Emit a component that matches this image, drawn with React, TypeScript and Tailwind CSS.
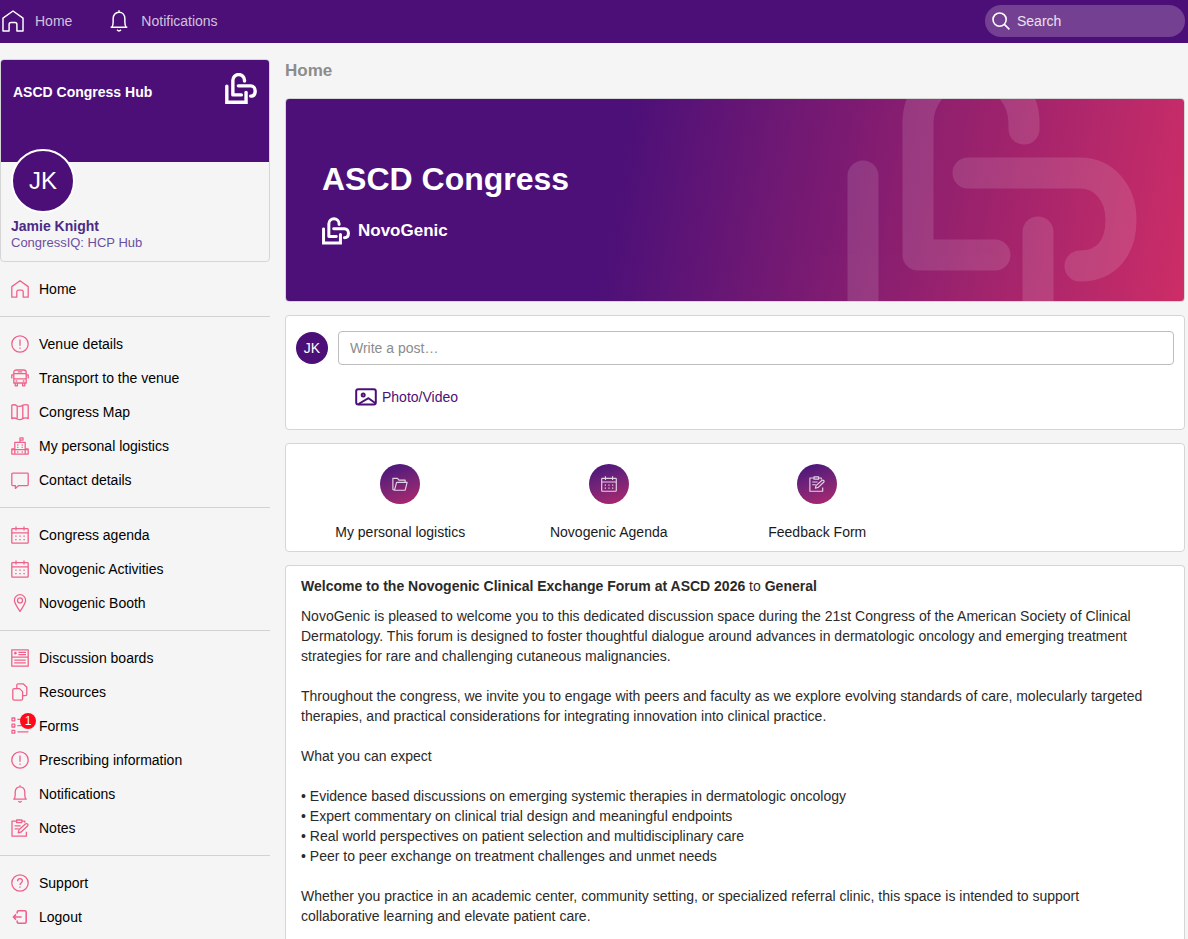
import { useState } from 'react';
import type { ReactNode } from 'react';

type IconName =
  | 'home' | 'alert' | 'bus' | 'map' | 'building' | 'chat' | 'calendar' | 'pin' | 'board'
  | 'copy' | 'list' | 'bell' | 'notes' | 'help' | 'logout' | 'folder' | 'search';

// all icons share an 18x18 grid
const icons: Record<IconName, ReactNode> = {
  home: <path d="M.8 6.6 9 .8l8.2 5.8v10.6h-5v-5.4q0-1.6-1.6-1.6H7.4q-1.6 0-1.6 1.6v5.4h-5z" />,
  alert: (
    <>
      <circle cx="9" cy="9" r="8.2" />
      <path d="M9 4.6v6.2M9 12.4v1.4" />
    </>
  ),
  bus: (
    <>
      <path d="M2.8 14V3.6Q2.8 1 5.4 1h7.2q2.6 0 2.6 2.6V14zM2.8 4.6h12.4M2.8 9.8h12.4M6.8 2.8h4.4" />
      <path d="M2.8 5.8H.8v3.6M15.2 5.8h2v3.6M4.6 12h1.6M11.8 12h1.6M4.2 14v2.8h2.2V14M11.6 14v2.8h2.2V14" />
    </>
  ),
  map: (
    <path d="M.8 2.2q2.7-1.2 5.4.8 2.800 1 5.600-.8 2.700-1.200 5.400 0v13.400q-2.600-1.400-5.400 0-2.800 1.800-5.600.4-2.800-1.800-5.400-.4zM6.200 3v13M11.800 2.200v13.400" />
  ),
  building: (
    <>
      <path d="M3.800 17V5.400h10.400V17M.4 17.200h17.200M.8 17v-5h3M17.200 17v-5h-3M.4 12.600h17.200M9 5.400V.8h3v2.400H9" />
      <path d="M6.200 8h1.200M10.600 8h1.200M6.200 10.400h1.200M10.600 10.400h1.200M6.200 15h1.200M10.600 15h1.200" />
    </>
  ),
  chat: <path d="M1.600 2.200h14.800q.8 0 .8.800v10.800q0 .8-.8.800H7.600l-3.200 2.800v-2.800H1.600q-.8 0-.8-.8V3q0-.8.8-.8z" />,
  calendar: (
    <>
      <path d="M1.600 2.600h14.800q.8 0 .8.800v13q0 .8-.8.800H1.600q-.8 0-.8-.8v-13q0-.8.8-.8zM.8 6.800h16.400M5 .4v4M13 .4v4" />
      <path d="M4.200 10.200h1.400M8.300 10.200h1.400M12.400 10.200h1.400M4.200 13.600h1.400M8.300 13.600h1.400M12.400 13.600h1.400" />
    </>
  ),
  pin: (
    <>
      <path d="M9 17.400C6.800 13.600 3.400 9.800 3.400 6.300a5.600 5.600 0 0 1 11.200 0c0 3.500-3.400 7.300-5.600 11.100z" />
      <circle cx="9" cy="6.400" r="2.500" />
    </>
  ),
  board: (
    <>
      <path d="M.8.8h16.400v16.400H.8zM.8 8.200h16.400M7.400 3.400H15M7.400 5.600H15M3.200 11.200h11.600M3.200 13.800h11.600" />
      <circle cx="4.400" cy="4.200" r=".7" />
    </>
  ),
  copy: (
    <path d="M3.200 5.600h5.400l3 3v7.200q0 1.400-1.400 1.400h-7q-1.400 0-1.400-1.400V7q0-1.400 1.400-1.400zM5.800 5.600V2.200Q5.800.8 7.200.8h5l3.600 3.400v7q0 1.400-1.400 1.400h-2.800" />
  ),
  list: (
    <path d="M1 1h2.800v2.800H1zM1 7.200h2.800V10H1zM1 13.400h2.800v2.800H1zM6.400 2.400h11M6.400 8.600h11M6.400 14.800h11" />
  ),
  bell: (
    <>
      <path d="M2.200 14.200h13.600M3.200 14.200c.8-1.400 1-2.600 1-4.200V7.200C4.200 4 6.200 1.800 9 1.800S13.800 4 13.800 7.200V10c0 1.600.2 2.800 1 4.200M9 1.800V.2" />
      <path d="M7.400 16.200q1.600 2 3.200 0" />
    </>
  ),
  notes: (
    <>
      <path d="M5.600 2.200H1v15h14.400v-4.400M10.800 2.200h3v1.600M5.600 1h5.200v2.600H5.600zM3.600 6.800h6M3.600 9.800h4" />
      <path d="m7.200 13.800.7-3 6.800-6q1-.6 1.900.3.800 1-.1 1.900l-6.400 6z" />
    </>
  ),
  help: (
    <>
      <circle cx="9" cy="9" r="8.200" />
      <path d="M6.600 7.200C6.600 5.600 7.600 4.700 9 4.700s2.400.9 2.400 2.200c0 1.700-2.400 1.900-2.400 4M9 12.400v1.400" />
    </>
  ),
  logout: (
    <path
      strokeWidth="1.600"
      d="M6.200 5.400V4.200q0-1.400 1.400-1.400h6.200q1.400 0 1.400 1.400v9.600q0 1.400-1.400 1.400H7.600q-1.400 0-1.400-1.400v-1.200M10.600 9H2.400M5 6.400 2.400 9 5 11.600"
    />
  ),
  folder: (
    <path d="M2.800 16 1 15.200V2.600h5.200l1.600 2h7v2.600M2.800 16h12l2.200-8.800H5.200z" />
  ),
  search: (
    <>
      <circle cx="7.600" cy="7.600" r="6.600" />
      <path d="m12.400 12.400 5 5" />
    </>
  ),
};

function Icon({ name, className = 'size-[18px]', weight = 1.3 }: { name: IconName; className?: string; weight?: number }) {
  return (
    <svg
      viewBox="0 0 18 18"
      fill="none"
      stroke="currentColor"
      strokeWidth={weight}
      strokeLinejoin="round"
      className={`shrink-0 ${className}`}
      aria-hidden="true"
    >
      {icons[name]}
    </svg>
  );
}

function Logo({ className, viewBox = '561 -43 290 282' }: { className: string; viewBox?: string }) {
  return (
    <svg viewBox={viewBox} fill="none" stroke="white" strokeWidth="31" strokeLinecap="round" className={className} aria-hidden="true">
      <path d="M577 77v146h175v-90" />
      <path strokeLinejoin="round" d="M738 30v-6a53 53 0 0 0-106 0v132h77" />
      <path d="M682 74h112c24 0 41 20 41 47 0 28-15 46-41 46" />
    </svg>
  );
}

type NavItem = { label: string; icon: IconName; badge?: number };

const groups: NavItem[][] = [
  [{ label: 'Home', icon: 'home' }],
  [
    { label: 'Venue details', icon: 'alert' },
    { label: 'Transport to the venue', icon: 'bus' },
    { label: 'Congress Map', icon: 'map' },
    { label: 'My personal logistics', icon: 'building' },
    { label: 'Contact details', icon: 'chat' },
  ],
  [
    { label: 'Congress agenda', icon: 'calendar' },
    { label: 'Novogenic Activities', icon: 'calendar' },
    { label: 'Novogenic Booth', icon: 'pin' },
  ],
  [
    { label: 'Discussion boards', icon: 'board' },
    { label: 'Resources', icon: 'copy' },
    { label: 'Forms', icon: 'list', badge: 1 },
    { label: 'Prescribing information', icon: 'alert' },
    { label: 'Notifications', icon: 'bell' },
    { label: 'Notes', icon: 'notes' },
  ],
  [
    { label: 'Support', icon: 'help' },
    { label: 'Logout', icon: 'logout' },
  ],
];

const shortcuts: NavItem[] = [
  { label: 'My personal logistics', icon: 'folder' },
  { label: 'Novogenic Agenda', icon: 'calendar' },
  { label: 'Feedback Form', icon: 'notes' },
];

const expectations = [
  'Evidence based discussions on emerging systemic therapies in dermatologic oncology',
  'Expert commentary on clinical trial design and meaningful endpoints',
  'Real world perspectives on patient selection and multidisciplinary care',
  'Peer to peer exchange on treatment challenges and unmet needs',
];

function Header() {
  return (
    <header className="flex h-[43px] items-center justify-between bg-[#4c0f78] pr-[3px] pb-0.5 pl-[2px] text-white">
      <nav className="flex items-center gap-9">
        <a href="#" className="flex items-center gap-[11px]">
          <Icon name="home" className="size-[22px]" weight={1.2} />
          <span className="text-white/75">Home</span>
        </a>
        <a href="#" className="flex items-center gap-[11px]">
          <Icon name="bell" className="size-[22px]" weight={1.2} />
          <span className="text-white/75">Notifications</span>
        </a>
      </nav>
      <label className="flex h-8 w-[200px] items-center gap-[7px] rounded-full bg-[#734092] px-[7px]">
        <Icon name="search" weight={1.6} />
        <input
          type="search"
          aria-label="Search"
          placeholder="Search"
          className="w-full min-w-0 bg-transparent outline-none placeholder:text-white/85"
        />
      </label>
    </header>
  );
}

function Sidebar() {
  return (
    <aside className="w-[270px] shrink-0">
      <div className="overflow-hidden rounded border border-[#d5d5d5]">
        <div className="flex h-[102px] items-start justify-between bg-[#4c0f78] px-3 pt-[13px] text-white">
          <span className="pt-[9px] font-bold">ASCD Congress Hub</span>
          <Logo className="h-[31px] w-8" />
        </div>
        <div className="px-2.5 pb-2.5">
          <div className="relative -mt-[13px] flex size-16 items-center justify-center rounded-full border-2 border-white bg-[#4c0f78] text-2xl text-white">
            JK
          </div>
          <a href="#" className="mt-1 block leading-[18px] font-bold text-[#4b2a86]">Jamie Knight</a>
          <p className="text-[13px] leading-4 text-[#6a4fa0]">CongressIQ: HCP Hub</p>
        </div>
      </div>
      <nav className="divide-y divide-[#d2d2d2]">
        {groups.map((group, i) => (
          <ul key={i} className="py-2.5 last:pb-0">
            {group.map((item) => (
              <li key={item.label}>
                <a href="#" className="flex h-[34px] items-center gap-2.5 pl-[11px] text-black">
                  <span className="relative text-[#f0618a]">
                    <Icon name={item.icon} />
                    {item.badge && (
                      <span className="absolute -top-1 left-[9px] flex size-4 items-center justify-center rounded-full bg-[#ff0a1c] text-xs text-white">
                        {item.badge}
                      </span>
                    )}
                  </span>
                  {item.label}
                </a>
              </li>
            ))}
          </ul>
        ))}
      </nav>
    </aside>
  );
}

function Banner() {
  return (
    <section className="relative flex h-[204px] flex-col justify-center overflow-hidden rounded border border-[#d5d5d5] bg-[linear-gradient(100deg,#4c1078_37%,#cd2e67_100%)] pt-1 pl-9 text-white">
      <h2 className="text-[32px] leading-10 font-bold">ASCD Congress</h2>
      <div className="mt-[18px] flex items-center gap-2">
        <Logo className="h-7 w-7" />
        <span className="text-[17px] leading-6 font-bold">NovoGenic</span>
      </div>
      <Logo viewBox="561 0 290 202" className="absolute top-0 right-[47px] h-[202px] w-[290px] opacity-[0.12]" />
    </section>
  );
}

function Composer() {
  const [post, setPost] = useState('');

  return (
    <section className="rounded border border-[#d5d5d5] bg-white px-2.5 pt-[15px] pb-[22px]">
      <div className="flex items-center gap-2.5">
        <div className="flex size-8 shrink-0 items-center justify-center rounded-full bg-[#4c0f78] text-white">JK</div>
        <input
          type="text"
          aria-label="Write a post"
          placeholder="Write a post…"
          value={post}
          onChange={(e) => setPost(e.target.value)}
          className="h-[34px] w-full rounded border border-[#bdbdbd] px-[11px] outline-none placeholder:text-[#8c8c8c]"
        />
      </div>
      <button type="button" className="mt-[22px] ml-[59px] flex items-center gap-[5px] text-[#4c0f78]">
        <svg viewBox="0 0 22 18" fill="none" stroke="currentColor" strokeWidth="2" strokeLinejoin="round" className="h-[18px] w-[22px]" aria-hidden="true">
          <rect x="1.200" y="1.200" width="19.600" height="15.400" rx="2" />
          <path strokeWidth="2" d="m3.500 16 10-5.800 7 5" />
          <circle cx="8.200" cy="7" r="1.500" />
        </svg>
        Photo/Video
      </button>
    </section>
  );
}

function Shortcuts() {
  return (
    <section className="grid grid-cols-4 rounded border border-[#d5d5d5] bg-white pt-5 pr-[54px] pb-[9px] pl-2.5">
      {shortcuts.map((item) => (
        <a key={item.label} href="#" className="flex flex-col items-center text-[#1a1a1a]">
          <span className="flex size-10 items-center justify-center rounded-full bg-linear-160 from-[#430e7c] to-[#b2246c] text-white/80">
            <Icon name={item.icon} className="size-4" />
          </span>
          <span className="mt-[18px]">{item.label}</span>
        </a>
      ))}
    </section>
  );
}

function WelcomePost() {
  return (
    <article className="flex-1 rounded-t border border-b-0 border-[#d5d5d5] bg-white pt-2.5 pr-[30px] pl-[15px] text-[#2a2a2a]">
      <h3>
        <b>Welcome to the Novogenic Clinical Exchange Forum at ASCD 2026</b> to <b>General</b>
      </h3>
      <div className="mt-2.5 space-y-5">
        <p>
          NovoGenic is pleased to welcome you to this dedicated discussion space during the 21st Congress of the
          American Society of Clinical Dermatology. This forum is designed to foster thoughtful dialogue around
          advances in dermatologic oncology and emerging treatment strategies for rare and challenging cutaneous
          malignancies.
        </p>
        <p>
          Throughout the congress, we invite you to engage with peers and faculty as we explore evolving standards of
          care, molecularly targeted therapies, and practical considerations for integrating innovation into clinical
          practice.
        </p>
        <p>What you can expect</p>
        <ul>
          {expectations.map((text) => (
            <li key={text}>• {text}</li>
          ))}
        </ul>
        <p>
          Whether you practice in an academic center, community setting, or specialized referral clinic, this space is
          intended to support collaborative learning and elevate patient care.
        </p>
      </div>
    </article>
  );
}

export default function App() {
  return (
    <div className="flex min-h-screen flex-col bg-[#f5f5f5] font-['Liberation_Sans',Arial,sans-serif] text-sm">
      <Header />
      <div className="flex flex-1 gap-[15px] pr-[3px]">
        <div className="pt-4">
          <Sidebar />
        </div>
        <main className="flex min-w-0 flex-1 flex-col gap-[13px] pt-4">
          <h1 className="mb-0.5 text-[17px] leading-6 font-bold text-[#8c8c8c]">Home</h1>
          <Banner />
          <Composer />
          <Shortcuts />
          <WelcomePost />
        </main>
      </div>
    </div>
  );
}
